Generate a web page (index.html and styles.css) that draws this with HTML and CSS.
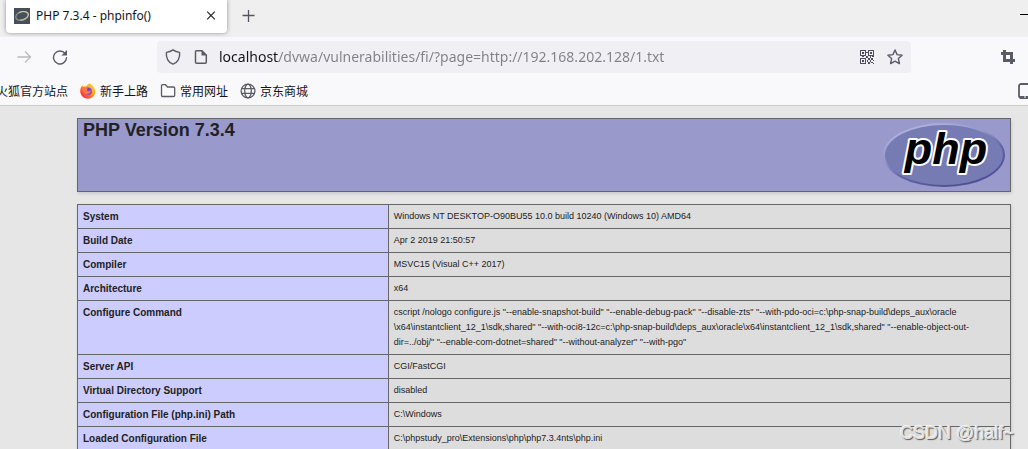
FILE: index.html
```html
<!DOCTYPE html>
<html lang="zh-CN">
<head>
<meta charset="utf-8">
<title>PHP 7.3.4 - phpinfo()</title>
<link rel="stylesheet" href="styles.css">
</head>
<body>
<header class="browser">
  <div class="tabs">
    <div class="tab">
      <svg class="icon" viewBox="0 0 16 16" aria-hidden="true"><rect width="16" height="16" fill="#484e5a"/><ellipse cx="8" cy="8" rx="6.4" ry="4.2" transform="rotate(-16 8 8)" fill="none" stroke="#8d9387" stroke-width="1.3"/><path d="M5 4.7C9 2.5 15 3.5 14.3 7.2C13.6 10 9 12.3 6 12" fill="none" stroke="#c2cda0" stroke-width="1.1"/></svg>
      <span class="tab-title">PHP 7.3.4 - phpinfo()</span>
      <button class="icon-button" aria-label="关闭标签页"><svg class="icon" viewBox="0 0 16 16"><path d="M4.2 3.7l7.6 7.6M11.8 3.7l-7.6 7.6" stroke="#222" stroke-width="1.2"/></svg></button>
    </div>
    <button class="icon-button new-tab" aria-label="新建标签页"><svg class="icon" viewBox="0 0 16 16"><path d="M7.5 2v12M1.500 7.500h12" stroke="#555560" stroke-width="1.3"/></svg></button>
    <button class="icon-button minimize" aria-label="最小化"><svg class="icon" viewBox="0 0 16 16"><path d="M0 7.5h12" stroke="#000"/></svg></button>
  </div>
  <nav class="toolbar">
    <button class="icon-button" aria-label="前进" disabled><svg class="icon" viewBox="0 0 16 16"><path d="M1.5 8h13M9 2.5L14.5 8L9 13.5" fill="none" stroke="#b9b9be" stroke-width="1.3"/></svg></button>
    <button class="icon-button" aria-label="刷新"><svg class="icon" viewBox="0 0 16 16"><path d="M13.5 5A6.5 6.5 0 1 0 14.5 8.8" fill="none" stroke="#5b5b66" stroke-width="1.4" stroke-linecap="round"/><path d="M15 1v5.6H9.4z" fill="#5b5b66"/></svg></button>
    <div class="address">
      <svg class="icon" viewBox="0 0 16 16" aria-hidden="true"><path d="M8 .9C10 2.4 12 3.1 14.6 3.4C15.3 9 12.5 13.6 8 15.2C3.5 13.6 .7 9 1.4 3.4C4 3.1 6 2.4 8 .9z" fill="none" stroke="#5b5b66" stroke-width="1.4" stroke-linejoin="round"/></svg>
      <svg class="icon" viewBox="0 0 16 16" aria-hidden="true"><path d="M3.5 1.7H9L13.3 6V13.3Q13.3 14.3 12.3 14.3H3.5Q2.5 14.3 2.5 13.3V2.7Q2.5 1.7 3.5 1.7z" fill="none" stroke="#5b5b66" stroke-width="1.5"/><path d="M8.5 1.5L13.5 6.5H8.5z" fill="#5b5b66"/></svg>
      <input class="url" type="text" aria-label="地址" value="localhost/dvwa/vulnerabilities/fi/?page=http://192.168.202.128/1.txt">
      <button class="icon-button" aria-label="二维码"><svg class="icon" viewBox="0 0 16 16" shape-rendering="crispEdges"><path d="M1.5 1.5h5v5h-5zM9.5 1.5h5v5h-5zM1.5 9.5h5v5h-5z" fill="none" stroke="#4f4f5a"/><path d="M3 3h2v2H3zM11 3h2v2h-2zM3 11h2v2H3zM7 3h2v1H7zM7 7h2v2H7zM3 7h2v1H3zM11 7h1v2h-1zM13 7h2v1h-2zM9 9h2v2H9zM12 9h2v2h-2zM8 11h1v2H8zM11 11h1v2h-1zM14 11h1v1h-1zM9 13h2v2H9zM12 13h2v1h-2zM14 14h1v1h-1z" fill="#4f4f5a"/></svg></button>
      <button class="icon-button" aria-label="添加书签"><svg class="icon" viewBox="0 0 16 16"><path d="M8 1l2.1 4.600 5 .6-3.700 3.400 1 5L8 12.100l-4.400 2.500 1-5L.9 6.200l5-.6z" fill="none" stroke="#5b5b66" stroke-width="1.4" stroke-linejoin="round"/></svg></button>
    </div>
    <button class="icon-button" aria-label="截图"><svg class="icon" viewBox="0 0 16 16"><path d="M4.5 1v10.500H15M1 4.500h10.500V15" fill="none" stroke="#5b5b66" stroke-width="3"/></svg></button>
  </nav>
  <nav class="bookmarks">
    <a class="bookmark clipped" href="#">火狐官方站点</a>
    <a class="bookmark" href="#"><svg class="icon" viewBox="0 0 16 16" aria-hidden="true"><defs><linearGradient id="fox" x1="1" y1="0" x2="0" y2="1"><stop offset="0" stop-color="#ffe04b"/><stop offset=".45" stop-color="#ff9826"/><stop offset=".75" stop-color="#ff4540"/><stop offset="1" stop-color="#e92475"/></linearGradient></defs><path d="M10 .3C11 2 13.5 3 14.5 5.2C17 11 13 15.7 8 15.7C3.5 15.7 .2 12.4 .2 8C.2 5.6 1.2 3.5 2.6 2.2L3 4C4 3.3 5 3.1 6 3.4C7.5 1.5 9 1 10 .3z" fill="url(#fox)"/><circle cx="8" cy="8.2" r="3.8" fill="#743fe0"/><path d="M2.5 5.5C4 4 6.5 5 8.2 5.9C7 6 6.5 7 7.2 7.7C8 8.7 10 8 11 7C11 11 7 12.5 4.7 10.5C3 9 3 7 2.5 5.5z" fill="#ff7939"/></svg>新手上路</a>
    <a class="bookmark" href="#"><svg class="icon" viewBox="0 0 16 16" aria-hidden="true"><path d="M1.500 3Q1.500 1.700 2.800 1.700H5.500L7.500 4H13.500Q14.700 4 14.700 5.200V12.200Q14.700 13.500 13.400 13.500H2.800Q1.500 13.500 1.500 12.200z" fill="none" stroke="#5b5b66" stroke-width="1.3"/></svg>常用网址</a>
    <a class="bookmark" href="#"><svg class="icon" viewBox="0 0 16 16" aria-hidden="true"><g fill="none" stroke="#5b5b66" stroke-width="1.3"><circle cx="8" cy="8" r="6.9"/><ellipse cx="8" cy="8" rx="3.3" ry="6.9"/><path d="M1.5 5.700h13M1.500 10.300h13"/></g></svg>京东商城</a>
    <button class="icon-button mobile" aria-label="移动设备书签"><svg class="icon" viewBox="0 0 16 16"><rect x="1" y="1" width="13" height="14" rx="2" fill="none" stroke="#5b5b66" stroke-width="1.8"/><path d="M1 14h13" stroke="#5b5b66" stroke-width="2"/><path d="M6 14h2" stroke="#fff"/></svg></button>
  </nav>
</header>
<main class="page">
  <section class="banner">
    <h1>PHP Version 7.3.4</h1>
    <svg class="logo" viewBox="0 0 122 64" role="img" aria-label="PHP logo">
      <defs><linearGradient id="rim" x1=".2" y1="0" x2=".8" y2="1"><stop offset="0" stop-color="#b5b7df"/><stop offset=".35" stop-color="#9698ca"/><stop offset=".6" stop-color="#6163a8"/><stop offset="1" stop-color="#484a92"/></linearGradient></defs>
      <ellipse cx="61" cy="32" rx="61" ry="32" fill="url(#rim)"/>
      <ellipse cx="61" cy="32" rx="59" ry="30" fill="#777bb3"/>
      <text class="logo-text" x="63" y="41" text-anchor="middle">php</text>
    </svg>
  </section>
  <table class="info">
    <tbody>
      <tr><th scope="row">System</th><td>Windows NT DESKTOP-O90BU55 10.0 build 10240 (Windows 10) AMD64</td></tr>
      <tr><th scope="row">Build Date</th><td>Apr 2 2019 21:50:57</td></tr>
      <tr><th scope="row">Compiler</th><td>MSVC15 (Visual C++ 2017)</td></tr>
      <tr><th scope="row">Architecture</th><td>x64</td></tr>
      <tr><th scope="row">Configure Command</th><td>cscript /nologo configure.js "--enable-snapshot-build" "--enable-debug-pack" "--disable-zts" "--with-pdo-oci=c:\php-snap-build\deps_aux\oracle<br>\x64\instantclient_12_1\sdk,shared" "--with-oci8-12c=c:\php-snap-build\deps_aux\oracle\x64\instantclient_12_1\sdk,shared" "--enable-object-out-<br>dir=../obj/" "--enable-com-dotnet=shared" "--without-analyzer" "--with-pgo"</td></tr>
      <tr><th scope="row">Server API</th><td>CGI/FastCGI</td></tr>
      <tr><th scope="row">Virtual Directory Support</th><td>disabled</td></tr>
      <tr><th scope="row">Configuration File (php.ini) Path</th><td>C:\Windows</td></tr>
      <tr><th scope="row">Loaded Configuration File</th><td>C:\phpstudy_pro\Extensions\php\php7.3.4nts\php.ini</td></tr>
    </tbody>
  </table>
</main>
<div class="watermark">CSDN @half~</div>
</body>
</html>
```
FILE: styles.css
```css
* { box-sizing: border-box; }

body {
  margin: 0;
  height: 100vh;
  overflow: hidden;
  position: relative;
  background: #e6e6e6;
  font-family: "Liberation Sans", "Noto Sans CJK SC", sans-serif;
}

.browser {
  background: #f9f9fb;
  border-bottom: 1px solid #cccccf;
  font-family: "Noto Sans", "Noto Sans CJK SC", sans-serif;
  color: #15141a;
}

.icon { display: block; flex: none; width: 16px; height: 16px; }

.icon-button {
  flex: none;
  padding: 0;
  border: 0;
  background: none;
}

.tabs {
  display: flex;
  align-items: flex-start;
  height: 37px;
  padding-left: 6px;
  background: #efefef;
}

.tab {
  display: flex;
  align-items: center;
  gap: 6px;
  width: 221px;
  height: 33px;
  padding: 0 8px 2px;
  border-radius: 0 0 4px 4px;
  background: #fff;
  box-shadow: 0 0 4px rgba(0, 0, 0, .4);
}

.tab-title { flex: 1; font-size: 12px; white-space: nowrap; }
.new-tab { margin: 8px 0 0 14px; }
.minimize { margin: 7px -8px 0 auto; }

.toolbar {
  display: flex;
  align-items: center;
  height: 40px;
  padding: 0 12px 0 16px;
  gap: 20px;
}

.address {
  display: flex;
  flex: 1;
  align-items: center;
  gap: 12px;
  height: 32px;
  margin: 0 69px;
  padding: 0 8px;
  border-radius: 4px;
  background: #f0f0f4;
}

.url {
  flex: 1;
  min-width: 0;
  margin-left: -2px;
  padding: 0;
  border: 0;
  font: 14px/24px "Noto Sans", sans-serif;
  color: transparent;
  background: linear-gradient(90deg, #15141a 60px, #808086 60px);
  -webkit-background-clip: text;
  background-clip: text;
}

.bookmarks {
  display: flex;
  align-items: center;
  gap: 12px;
  height: 28px;
  overflow: hidden;
}

.bookmark {
  display: flex;
  align-items: center;
  gap: 4px;
  font-size: 12px;
  color: #15141a;
  text-decoration: none;
  white-space: nowrap;
}

.clipped { margin-left: -4px; }
.mobile { margin: 0 -6px 0 auto; }

.page { padding: 12px 17px 0 77px; color: #222; }

.banner {
  display: flex;
  justify-content: space-between;
  height: 74px;
  margin-bottom: 12px;
  padding: 4px 5px;
  border: 1px solid #666;
  background: #9999cc;
  box-shadow: 1px 2px 3px #ccc;
}

.banner h1 { margin: 0; font-size: 18px; line-height: 14px; }
.logo { width: 122px; height: 64px; }

.logo-text {
  font: italic bold 45px "Liberation Sans", sans-serif;
  fill: #000;
  stroke: #fff;
  stroke-width: 4px;
  stroke-linejoin: round;
  paint-order: stroke;
}

.info {
  width: 100%;
  border-collapse: collapse;
  table-layout: fixed;
  font-size: 9px;
  line-height: 15px;
  box-shadow: 1px 2px 3px #ccc;
}

.info th, .info td {
  padding: 4px 5px;
  border: 1px solid #666;
  text-align: left;
  vertical-align: top;
}

.info th { width: 33.3%; background: #ccccff; font-size: 10px; }
.info td { background: #ddd; }

.watermark {
  position: absolute;
  right: 14px;
  bottom: 6px;
  font-size: 18px;
  line-height: 20px;
  color: #dedede;
  text-shadow: -1px -1px 0 #f4f4f4, 1px 1px 1px #555;
}
```
